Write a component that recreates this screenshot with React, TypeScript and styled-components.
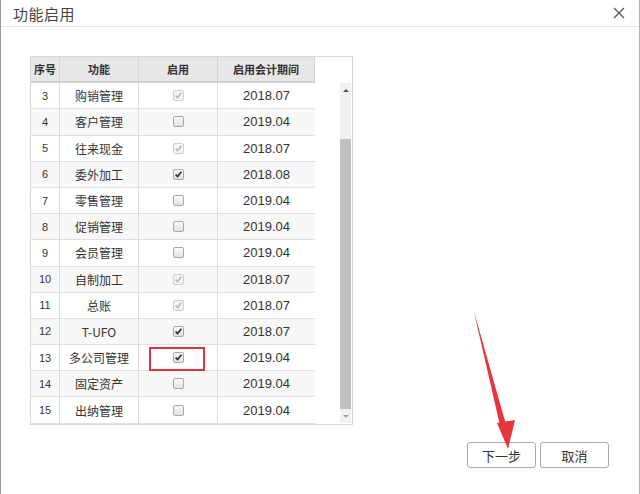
import React from "react";
import styled, { createGlobalStyle } from "styled-components";

const Global = createGlobalStyle`
  html, body { margin: 0; padding: 0; background: #fff; }
  body { font-family: "Liberation Sans", "Noto Sans CJK SC", Arial, sans-serif; color: #333; }
`;

const Dialog = styled.div`
  position: relative;
  width: 640px;
  height: 494px;
  box-sizing: border-box;
  border-left: 1px solid #9a9a9a;
  border-right: 1px solid #b5b5b5;
  background: #fff;
  display: flex;
  flex-direction: column;
`;

const TitleBar = styled.div`
  height: 26px;
  border-bottom: 1px solid #e3e3e3;
  display: flex;
  align-items: center;
  justify-content: space-between;
  padding: 0 14px 0 12px;
`;

const Title = styled.span`
  font-family: "Noto Sans CJK SC", sans-serif;
  font-size: 15px;
  color: #444;
  letter-spacing: 0.5px;
`;

const Body = styled.div`
  padding: 29px 0 0 29px;
`;

const TableBox = styled.div`
  width: 323px;
  height: 369px;
  box-sizing: border-box;
  border: 1px solid #d6d6d6;
  display: flex;
`;

const Table = styled.div`
  width: 284px;
  display: grid;
  grid-template-columns: 29px 79px 79px 97px;
  grid-auto-rows: 26.2px;
  align-content: start;
`;

const HeadCell = styled.div`
  background: #e7e7e7;
  border-right: 1px solid #d4d4d4;
  border-bottom: 2px solid #d0d0d0;
  box-sizing: border-box;
  display: flex;
  align-items: center;
  justify-content: center;
  font-family: "Noto Sans CJK SC", sans-serif;
  font-size: 11px;
  font-weight: 700;
  color: #333;
  &:last-child { border-right: none; }
`;

const Cell = styled.div<{ $alt: boolean; $last?: boolean; $cjk?: boolean; $size?: number }>`
  background: ${(p) => (p.$alt ? "#f8f8f8" : "#fff")};
  border-right: ${(p) => (p.$last ? "none" : "1px solid #dcdcdc")};
  border-bottom: 1px solid #e0e0e0;
  box-sizing: border-box;
  display: flex;
  align-items: center;
  justify-content: center;
  font-family: ${(p) => (p.$cjk ? '"Noto Sans CJK SC", sans-serif' : '"Liberation Sans", Arial, sans-serif')};
  font-size: ${(p) => p.$size ?? 12}px;
  color: #333;
`;

const Side = styled.div`
  flex: 1;
  display: flex;
  flex-direction: column;
  align-items: flex-end;
  padding: 26px 1px 1px 0;
`;

const ScrollTrack = styled.div`
  width: 11px;
  flex: 1;
  background: #f1f1f1;
  display: flex;
  flex-direction: column;
  align-items: center;
`;

const ScrollArrow = styled.div<{ $down?: boolean }>`
  height: 14px;
  display: flex;
  align-items: center;
  justify-content: center;
  width: 100%;
  background: #f1f1f1;
  &::after {
    content: "";
    width: 0;
    height: 0;
    border-left: 3px solid transparent;
    border-right: 3px solid transparent;
    ${(p) => (p.$down ? "border-top: 3px solid #a3a3a3;" : "border-bottom: 3px solid #505050;")}
  }
`;

const Thumb = styled.div`
  width: 100%;
  margin-top: 42px;
  flex: 1;
  background: #c1c1c1;
`;

const Box = styled.span<{ $checked: boolean; $disabled: boolean }>`
  width: 11px;
  height: 11px;
  box-sizing: border-box;
  border: 1px solid ${(p) => (p.$disabled ? "#cfcfcf" : "#a8a8a8")};
  border-radius: 2px;
  background: ${(p) => (p.$disabled ? "#f4f4f4" : "linear-gradient(#fafafa, #e2e2e2)")};
  display: flex;
  align-items: center;
  justify-content: center;
`;

const Footer = styled.div`
  display: flex;
  justify-content: flex-end;
  gap: 4px;
  padding: 17px 30px 0 0;
`;

const Button = styled.button`
  width: 69px;
  height: 26px;
  box-sizing: border-box;
  border: 1px solid #a9a9a9;
  border-radius: 3px;
  background: #fff;
  font-family: "Noto Sans CJK SC", sans-serif;
  font-size: 13px;
  color: #333;
  padding: 0;
`;

const Highlight = styled.div`
  position: absolute;
  left: 148px;
  top: 347px;
  width: 56px;
  height: 24px;
  box-sizing: border-box;
  border: 2px solid #e3333a;
  pointer-events: none;
`;

const Overlay = styled.svg`
  position: absolute;
  left: 0;
  top: 0;
  pointer-events: none;
`;

function Check({ checked, disabled }: { checked: boolean; disabled: boolean }) {
  return (
    <Box $checked={checked} $disabled={disabled}>
      {checked && (
        <svg width="9" height="9" viewBox="0 0 9 9">
          <path
            d="M1.6 4.6 L3.6 6.6 L7.4 1.8"
            fill="none"
            stroke={disabled ? "#b9b9b9" : "#2a2a2a"}
            strokeWidth={1.6}
          />
        </svg>
      )}
    </Box>
  );
}

type Row = { no: number; name: string; checked: boolean; disabled: boolean; date: string };

const rows: Row[] = [
  { no: 3, name: "购销管理", checked: true, disabled: true, date: "2018.07" },
  { no: 4, name: "客户管理", checked: false, disabled: false, date: "2019.04" },
  { no: 5, name: "往来现金", checked: true, disabled: true, date: "2018.07" },
  { no: 6, name: "委外加工", checked: true, disabled: false, date: "2018.08" },
  { no: 7, name: "零售管理", checked: false, disabled: false, date: "2019.04" },
  { no: 8, name: "促销管理", checked: false, disabled: false, date: "2019.04" },
  { no: 9, name: "会员管理", checked: false, disabled: false, date: "2019.04" },
  { no: 10, name: "自制加工", checked: true, disabled: true, date: "2018.07" },
  { no: 11, name: "总账", checked: true, disabled: true, date: "2018.07" },
  { no: 12, name: "T-UFO", checked: true, disabled: false, date: "2018.07" },
  { no: 13, name: "多公司管理", checked: true, disabled: false, date: "2019.04" },
  { no: 14, name: "固定资产", checked: false, disabled: false, date: "2019.04" },
  { no: 15, name: "出纳管理", checked: false, disabled: false, date: "2019.04" },
];

export default function App() {
  return (
    <>
      <Global />
      <Dialog>
        <TitleBar>
          <Title>功能启用</Title>
          <svg width="12" height="12" viewBox="0 0 12 12">
            <path d="M1 1 L11 11 M11 1 L1 11" stroke="#555" strokeWidth={1.3} />
          </svg>
        </TitleBar>
        <Body>
          <TableBox>
            <Table>
              <HeadCell>序号</HeadCell>
              <HeadCell>功能</HeadCell>
              <HeadCell>启用</HeadCell>
              <HeadCell>启用会计期间</HeadCell>
              {rows.map((r, i) => {
                const alt = i % 2 === 1;
                return (
                  <React.Fragment key={r.no}>
                    <Cell $alt={alt} $size={11}>{r.no}</Cell>
                    <Cell $alt={alt} $cjk $size={r.name === "T-UFO" ? 12 : 12}>{r.name}</Cell>
                    <Cell $alt={alt}>
                      <Check checked={r.checked} disabled={r.disabled} />
                    </Cell>
                    <Cell $alt={alt} $last $size={13}>{r.date}</Cell>
                  </React.Fragment>
                );
              })}
            </Table>
            <Side>
              <ScrollTrack>
                <ScrollArrow />
                <Thumb />
                <ScrollArrow $down />
              </ScrollTrack>
            </Side>
          </TableBox>
        </Body>
        <Footer>
          <Button>下一步</Button>
          <Button>取消</Button>
        </Footer>
        <Highlight />
        <Overlay width="640" height="494" viewBox="0 0 640 494">
          <path d="M473 312 L502 428 L505 428 Z" fill="#e8353b" />
          <path d="M473 312 L500 430 L506 428 Z" fill="#e8353b" />
          <path d="M496 423 L514 420 L507 449 Z" fill="#e8353b" />
        </Overlay>
      </Dialog>
    </>
  );
}
